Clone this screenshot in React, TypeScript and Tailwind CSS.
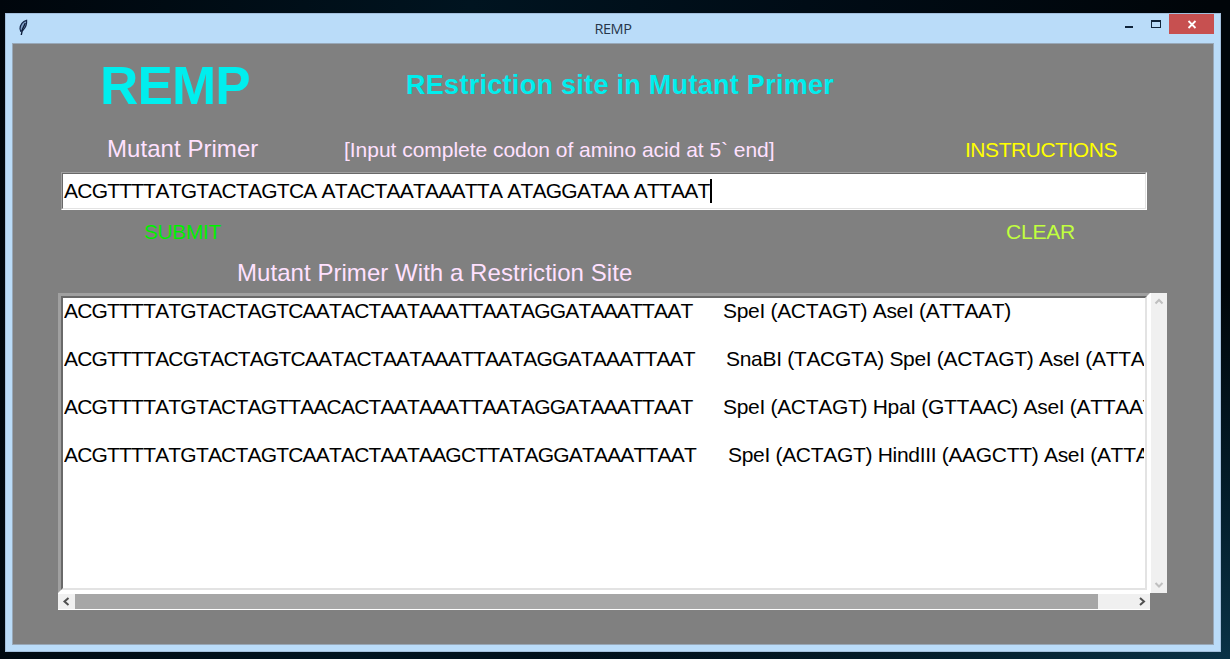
import React from "react";

const rows = [
  { seq: "ACGTTTTATGTACTAGTCAATACTAATAAATTAATAGGATAAATTAAT", width: "w-[659px]", sites: "SpeI (ACTAGT) AseI (ATTAAT)" },
  { seq: "ACGTTTTACGTACTAGTCAATACTAATAAATTAATAGGATAAATTAAT", width: "w-[662px]", sites: "SnaBI (TACGTA) SpeI (ACTAGT) AseI (ATTAAT)" },
  { seq: "ACGTTTTATGTACTAGTTAACACTAATAAATTAATAGGATAAATTAAT", width: "w-[659px]", sites: "SpeI (ACTAGT) HpaI (GTTAAC) AseI (ATTAAT)" },
  { seq: "ACGTTTTATGTACTAGTCAATACTAATAAGCTTATAGGATAAATTAAT", width: "w-[664px]", sites: "SpeI (ACTAGT) HindIII (AAGCTT) AseI (ATTAAT)" },
];

function Feather() {
  return (
    <svg className="ml-[11px] mt-[5px] h-[18px] w-[12px]" viewBox="0 0 12 18">
      <path d="M9.600 1.300C6 2.300 3.300 5.800 3 9.800l.7 2.400 2.200-.8C8.600 8.600 10 5 9.600 1.300Z" fill="#7f9fc6" stroke="#14264a" strokeWidth="1.200" />
      <path d="M8.300 4C6.500 7 5 10 4.300 16" fill="none" stroke="#0d1c38" strokeWidth="1.400" />
    </svg>
  );
}

function TitleBar() {
  return (
    <header className="flex h-[29px] shrink-0 items-start">
      <div className="w-[350px]"><Feather /></div>
      <h1 className="mt-[5px] flex-1 text-center font-['Open_Sans',sans-serif] text-[14.500px] leading-[20px] tracking-[-0.4px] text-[#26364a]">
        REMP
      </h1>
      <div className="flex w-[350px] justify-end pr-[5px]">
        <svg className="h-[20px] w-[98px]" viewBox="0 0 98 20">
          <rect x="8" y="12" width="8" height="2" fill="#10243a" />
          <path d="M34 6h10v8H34zM35 8v5h8V8z" fill="#10243a" fillRule="evenodd" />
          <rect x="52" y="0" width="45" height="20" fill="#c75050" />
          <path d="M71.500 7l7 7M78.500 7l-7 7" stroke="#fff" strokeWidth="1.800" />
        </svg>
      </div>
    </header>
  );
}

function Chevron({ d, color }: { d: string; color: string }) {
  return (
    <svg className="h-[17px] w-[17px] shrink-0" viewBox="0 0 17 17">
      <path d={d} fill="none" stroke={color} strokeWidth="2" />
    </svg>
  );
}

export default function App() {
  return (
    <div className="h-[659px] w-[1230px] overflow-hidden bg-[radial-gradient(ellipse_at_100%_100%,#0a3246_0%,#04202e_15%,transparent_40%),linear-gradient(100deg,#00060c_0%,#001420_35%,#000c16_60%,#000509_90%)] pl-[5px] pt-[13px] font-['Liberation_Sans',Arial,sans-serif] [font-kerning:none]">
      <div className="flex h-[639px] w-[1216px] flex-col border border-[#a3bfdc] bg-[#badcf9] px-[6px] pb-[6px]">
        <div className="-mx-[6px]"><TitleBar /></div>
        <main className="flex w-[1202px] flex-1 flex-col border border-[#98a8b8] bg-[#808080] pl-[45px]">
          <div className="flex h-[82px] items-start whitespace-nowrap font-bold text-[#00eeee]">
            <div className="ml-[42px] mt-[12px] w-[306px] text-[53px] leading-[60px] tracking-[-0.8px]">REMP</div>
            <div className="mt-[25px] text-[27px] leading-[32px] tracking-[0.29px]">REstriction site in Mutant Primer</div>
          </div>
          <div className="flex h-[46px] items-start whitespace-nowrap pl-[49px] pt-[9px] text-[#ffe1ff]">
            <div className="w-[237px] text-[24px] leading-[28px] tracking-[0.05px]">Mutant Primer</div>
            <div className="w-[621px] pt-[3px] text-[21px] leading-[24px] tracking-[-0.03px]">[Input complete codon of amino acid at 5` end]</div>
            <button className="pt-[3px] text-[21px] leading-[24px] tracking-[-0.46px] text-[#ffff00]">INSTRUCTIONS</button>
          </div>
          <div className="ml-[3px] h-[38px] w-[1086px] border border-b-white border-l-[#a0a0a0] border-r-white border-t-[#a0a0a0]">
            <div className="flex h-full items-center border border-b-[#e3e3e3] border-l-[#696969] border-r-[#e3e3e3] border-t-[#696969] bg-white pl-[1px]">
              <span className="whitespace-pre text-[21px] leading-[24px] tracking-[-0.77px] text-black">ACGTTTTATGTACTAGTCA ATACTAATAAATTA ATAGGATAA ATTAAT</span>
              <span className="h-[24px] w-[2px] bg-black" />
            </div>
          </div>
          <div className="flex h-[47px] items-start pl-[86px] pt-[10px] text-[21px] leading-[24px]">
            <button className="w-[862px] text-left tracking-[-0.4px] text-[#00ee00]">SUBMIT</button>
            <button className="tracking-[-0.2px] text-[#c0ff3e]">CLEAR</button>
          </div>
          <div className="h-[36px] whitespace-nowrap pl-[179px] pt-[2px] text-[24px] leading-[28px] tracking-[0.05px] text-[#ffe1ff]">Mutant Primer With a Restriction Site</div>
          <div className="flex">
            <div className="h-[300px] w-[1092px] border-[3px] border-b-white border-l-[#a0a0a0] border-r-white border-t-[#a0a0a0]">
              <div className="h-full border-2 border-b-[#e3e3e3] border-l-[#696969] border-r-[#e3e3e3] border-t-[#696969] bg-white px-[1px] pt-[1px]">
                <div className="overflow-hidden">
                  {rows.map((r) => (
                    <div key={r.seq} className="flex h-[48px] whitespace-nowrap text-[21px] leading-[24px] text-black">
                      <span className={"shrink-0 tracking-[-0.81px] " + r.width}>{r.seq}</span>
                      <span className="shrink-0 tracking-[-0.31px]">{r.sites}</span>
                    </div>
                  ))}
                </div>
              </div>
            </div>
            <div className="flex h-[300px] w-[17px] flex-col justify-between border-l border-white bg-[#f0f0f0]">
              <Chevron d="M4.500 10.500l3.500-3.500 3.500 3.500" color="#bfbfbf" />
              <Chevron d="M4.500 7l3.500 3.500L11.500 7" color="#bfbfbf" />
            </div>
          </div>
          <div className="flex h-[17px] w-[1092px] items-center border-y border-white bg-[#f0f0f0]">
            <Chevron d="M10.500 5L6.500 8.500l4 3.500" color="#505050" />
            <div className="h-full flex-1 bg-[#a6a6a6]" />
            <div className="flex w-[52px] justify-end">
              <Chevron d="M7 5l4 3.500-4 3.500" color="#505050" />
            </div>
          </div>
        </main>
      </div>
    </div>
  );
}
